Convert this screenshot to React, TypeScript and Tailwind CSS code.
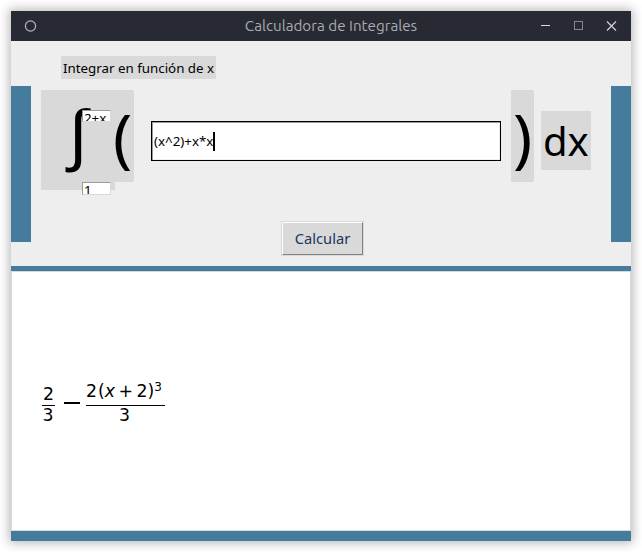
import React from "react";

const noto = "font-['Noto_Sans',sans-serif]";
const math = "font-['DejaVu_Sans',sans-serif]";

function TitleBar() {
  return (
    <header className="flex h-[30px] shrink-0 items-center bg-[#282a33] text-[#cfd2dc]">
      <div className="flex w-[100px] pl-[13px]">
        <svg width="13" height="13" viewBox="0 0 13 13" fill="none" stroke="#b4b7c1" strokeWidth="1.2">
          <circle cx="6.5" cy="6" r="5.1" />
        </svg>
      </div>
      <h1 className="flex-1 pl-[20px] text-center font-['Ubuntu','Noto_Sans',sans-serif] text-[15.2px] leading-[30px] text-[#a9acb2]">
        Calculadora de Integrales
      </h1>
      <div className="flex w-[100px] items-center justify-end pr-[14px]">
        <svg width="78" height="11" viewBox="0 0 78 11" fill="none">
          <path d="M2 4.5h9" stroke="#d8dae3" />
          <rect x="35.5" y="0.5" width="8" height="8" stroke="#858790" />
          <path d="M68 .5l9 9M77 .5l-9 9" stroke="#d0d3dd" strokeWidth="1.2" />
        </svg>
      </div>
    </header>
  );
}

function Limit({ value, className }: { value: string; className: string }) {
  return (
    <div
      className={`absolute left-[41px] w-[29px] overflow-hidden border border-t-[#999] border-r-[#d9d9d9] border-b-[#d9d9d9] border-l-[#999] bg-white pl-px text-[13.33px] text-black ${className}`}
    >
      {value}
    </div>
  );
}

function IntegralRow() {
  return (
    <div className="flex h-[156px] justify-between">
      <div className="w-[20px] bg-[#457b9d]" />
      <div className="flex w-[560px] items-start pt-[4px]">
        <div className="relative h-[100px] w-[70px] shrink-0">
          <div className="h-full w-[74px] bg-[#d9d9d9]">
            <span className="block pl-[28px] text-[68px] leading-[83px]">∫</span>
          </div>
          <Limit value="2+x" className="top-[20px] h-[12px] leading-[14px]" />
          <Limit value="1" className="top-[92px] h-[13px] leading-[14px]" />
        </div>
        <div className="relative h-[92px] w-[23px] bg-[#d9d9d9] pl-[2px] text-[64px] leading-[94px]">(</div>
        <div className="ml-[17px] mt-[31px] flex h-[40px] w-[350px] items-center border border-black bg-white pl-[2px] text-[13.33px] shadow-[inset_1px_1px_#999,inset_-1px_-1px_#eee]">
          <span className="pt-px">(x^2)+x*x</span>
          <span className="h-[19px] w-[2px] bg-black" />
        </div>
        <div className="ml-[10px] h-[92px] w-[23px] bg-[#d9d9d9] pl-[2px] text-[64px] leading-[94px]">)</div>
        <div className="ml-[7px] mt-[21px] h-[59px] w-[50px] bg-[#d9d9d9] pl-[2px] text-[40px] leading-[59px]">dx</div>
      </div>
      <div className="w-[20px] bg-[#457b9d]" />
    </div>
  );
}

function Result() {
  return (
    <section className={`h-[260px] border border-[#d9d9d9] bg-white pl-[30px] pt-[108px] text-black ${math}`}>
      <div className="flex items-start text-[17.3px] leading-[20px]">
        <div className="mt-[4px] w-[13px] text-center">
          <div className="h-[22px] w-[13px] border-b border-black">2</div>
          <div className="-ml-px leading-[19px]">3</div>
        </div>
        <div className="ml-[9px] mt-[22px] h-[2px] w-[16px] bg-black" />
        <div className="ml-[6px] w-[79px]">
          <div className="flex h-[26px] items-center whitespace-nowrap border-b border-black pb-[3px]">
            <span>2</span>
            <span className="ml-[1px]">(</span>
            <i>x</i>
            <span className="mx-[3.5px]">+</span>
            <span>2)</span>
            <sup className="-top-[4px] text-[12px] leading-none">3</sup>
          </div>
          <div className="pr-[2px] text-center leading-[18px]">3</div>
        </div>
      </div>
    </section>
  );
}

export default function App() {
  return (
    <div className={`h-[552px] w-[642px] overflow-hidden bg-white p-[11px] ${noto}`}>
      <main className="flex h-[530px] w-[620px] flex-col bg-[#eeeeee] text-black shadow-[0_0_10px_2px_rgba(0,0,0,0.28)]">
        <TitleBar />
        <div className="h-[45px] pl-[50px] pt-[15px]">
          <div className="h-[23px] w-[155px] whitespace-nowrap bg-[#d9d9d9] pl-[2px] text-[13.33px] leading-[24px]">
            Integrar en función de x
          </div>
        </div>
        <IntegralRow />
        <div className="-mt-[21px] flex h-[45px] justify-center pl-[3px]">
          <button className="h-[35px] w-[83px] border border-[#d9d9d9] p-0">
            <span className="block h-[33px] border border-t-white border-r-[#828282] border-b-[#828282] border-l-white bg-[#d9d9d9] text-[14.67px] leading-[31px] text-[#1d3557]">
              Calcular
            </span>
          </button>
        </div>
        <div className="h-[5px] bg-[#457b9d]" />
        <Result />
        <div className="h-[10px] bg-[#457b9d]" />
      </main>
    </div>
  );
}
